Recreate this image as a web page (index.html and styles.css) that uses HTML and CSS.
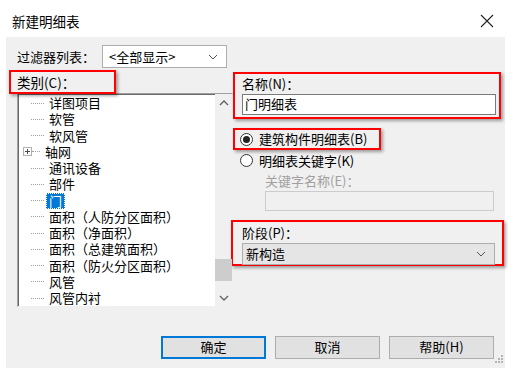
FILE: index.html
```html
<!DOCTYPE html>
<html lang="zh">
<head>
<meta charset="utf-8">
<link rel="stylesheet" href="styles.css">
</head>
<body>
<div class="window">
  <div class="titlebar">
    <span class="title">新建明细表</span>
    <svg class="close" width="14" height="14" viewBox="0 0 14 14"><path d="M1 1 L13 13 M13 1 L1 13" stroke="#222" stroke-width="1.1" fill="none"/></svg>
  </div>
  <div class="dialog">
    <div class="filter-row">
      <span class="filter-label">过滤器列表：</span>
      <div class="combo filter-combo">
        <span>&lt;全部显示&gt;</span>
        <svg class="chev" width="10" height="6" viewBox="0 0 10 6"><path d="M1 1 L5 5 L9 1" stroke="#555" stroke-width="1" fill="none"/></svg>
      </div>
    </div>
    <div class="main">
      <div class="left">
        <div class="cat-label red">类别(C)：</div>
        <div class="tree">
          <ul class="items">
            <li><span class="dots"></span><span class="txt">详图项目</span></li>
            <li><span class="dots"></span><span class="txt">软管</span></li>
            <li><span class="dots"></span><span class="txt">软风管</span></li>
            <li><span class="plus"></span><span class="dots short"></span><span class="txt">轴网</span></li>
            <li><span class="dots"></span><span class="txt">通讯设备</span></li>
            <li><span class="dots"></span><span class="txt">部件</span></li>
            <li><span class="dots"></span><span class="txt sel">门</span></li>
            <li><span class="dots"></span><span class="txt">面积（人防分区面积）</span></li>
            <li><span class="dots"></span><span class="txt">面积（净面积）</span></li>
            <li><span class="dots"></span><span class="txt">面积（总建筑面积）</span></li>
            <li><span class="dots"></span><span class="txt">面积（防火分区面积）</span></li>
            <li><span class="dots"></span><span class="txt">风管</span></li>
            <li><span class="dots"></span><span class="txt">风管内衬</span></li>
            <li><span class="dots"></span><span class="txt">风管隔热层</span></li>
          </ul>
          <div class="scrollbar">
            <svg class="arrow" width="10" height="6" viewBox="0 0 10 6"><path d="M1 5 L5 1 L9 5" stroke="#606060" stroke-width="1.3" fill="none"/></svg>
            <div class="track"><div class="thumb"></div></div>
            <svg class="arrow" width="10" height="6" viewBox="0 0 10 6"><path d="M1 1 L5 5 L9 1" stroke="#606060" stroke-width="1.3" fill="none"/></svg>
          </div>
        </div>
      </div>
      <div class="right">
        <div class="name-box red">
          <div class="lbl">名称(N)：</div>
          <div class="input">门明细表</div>
        </div>
        <div class="radio-box red">
          <span class="radio checked"></span><span class="rtxt">建筑构件明细表(B)</span>
        </div>
        <div class="radio-row">
          <span class="radio"></span><span class="rtxt">明细表关键字(K)</span>
        </div>
        <div class="kw-label">关键字名称(E)：</div>
        <div class="kw-input"></div>
        <div class="phase-box red">
          <div class="lbl">阶段(P)：</div>
          <div class="combo phase-combo">
            <span>新构造</span>
            <svg class="chev" width="10" height="6" viewBox="0 0 10 6"><path d="M1 1 L5 5 L9 1" stroke="#555" stroke-width="1" fill="none"/></svg>
          </div>
        </div>
      </div>
    </div>
    <div class="buttons">
      <div class="btn default">确定</div>
      <div class="btn">取消</div>
      <div class="btn">帮助(H)</div>
    </div>
    <svg class="grip" width="8" height="8" viewBox="0 0 8 8"><g fill="#b5b5b5"><rect x="6" y="0" width="2" height="2"/><rect x="3" y="3" width="2" height="2"/><rect x="6" y="3" width="2" height="2"/><rect x="0" y="6" width="2" height="2"/><rect x="3" y="6" width="2" height="2"/><rect x="6" y="6" width="2" height="2"/></g></svg>
  </div>
</div>
</body>
</html>
```

FILE: styles.css
```css
* { box-sizing: border-box; }
html, body { margin: 0; padding: 0; background: #fff; }
body {
  font-family: "Noto Sans CJK SC", "Microsoft YaHei", sans-serif;
  font-size: 13px;
  color: #000;
  width: 525px;
  height: 385px;
  overflow: hidden;
}
.window { width: 525px; }
.titlebar {
  height: 37px;
  display: flex;
  align-items: center;
  justify-content: space-between;
  padding: 0 31px 0 12px;
}
.title { font-size: 13.5px; line-height: 16px; margin-top: 5px; }
.close { margin-top: 5px; }

.dialog {
  position: relative;
  margin-left: 6px;
  width: 499px;
  height: 331px;
  background: #f0f0f0;
}
.filter-row {
  display: flex;
  align-items: center;
  padding: 8px 0 0 11px;
  height: 31px;
}
.filter-label { width: 85px; line-height: 16px; }
.combo {
  display: flex;
  align-items: center;
  justify-content: space-between;
  border: 1px solid #adadad;
  padding: 0 8px 0 6px;
  line-height: 16px;
}
.filter-combo { width: 125px; height: 23px; background: #fff; }

.main { display: flex; margin-top: 2px; }
.left { width: 227px; }
.red {
  border: 2px solid #f00;
  box-shadow: 2px 2px 3px rgba(0,0,0,0.35);
}
.cat-label {
  position: relative;
  z-index: 1;
  margin-left: 3px;
  width: 107px;
  height: 24px;
  padding: 1px 0 0 6px;
  font-size: 13.5px;
  line-height: 18px;
}
.tree {
  margin-left: 11px;
  margin-top: -1px;
  width: 216px;
  height: 214px;
  background: #fff;
  border: 1px solid;
  border-color: #a0a0a0 #f0f0f0 #f0f0f0 #a0a0a0;
  box-shadow: inset 1px 1px 0 #696969;
  display: flex;
  overflow: hidden;
}
.items {
  list-style: none;
  margin: 0;
  padding: 1px 0 0 0;
  flex: 1;
}
.items li {
  height: 16.25px;
  display: flex;
  align-items: center;
  position: relative;
  white-space: nowrap;
}
.dots {
  margin-left: 13px;
  width: 13px;
  border-top: 1px dotted #a0a0a0;
}
.dots.short { margin-left: 0; width: 8px; }
.plus {
  margin-left: 5px;
  width: 9px;
  height: 9px;
  border: 1px solid #919191;
  background: linear-gradient(#000, #000) center/5px 1px no-repeat,
              linear-gradient(#000, #000) center/1px 5px no-repeat, #fff;
  margin-right: 0;
  opacity: 0.7;
}
.txt { margin-left: 4px; line-height: 16px; padding: 0 1px; }
.txt.sel {
  background: #0078d7;
  color: #fff;
  outline: 1px dotted #fff;
  outline-offset: -1px;
  padding: 0 3px;
  margin-left: 2px;
}
.scrollbar {
  width: 17px;
  background: #f0f0f0;
  display: flex;
  flex-direction: column;
  align-items: center;
}
.arrow { margin: 6px 0 5px; }
.track { flex: 1; width: 17px; position: relative; }
.thumb {
  position: absolute;
  left: 0;
  right: 0;
  top: 148px;
  height: 22px;
  background: #cdcdcd;
}

.right { flex: 1; padding-top: 2px; }
.name-box {
  width: 268px;
  height: 47px;
  padding: 1px 0 0 7px;
}
.lbl { line-height: 17px; height: 18px; }
.input {
  margin-left: 0;
  margin-top: 1px;
  width: 254px;
  height: 21px;
  background: #fff;
  border: 1px solid #7a7a7a;
  padding: 0 0 0 2px;
  line-height: 18px;
}
.radio-box {
  margin-top: 9px;
  width: 148px;
  height: 22px;
  display: flex;
  align-items: center;
  padding-left: 5px;
}
.radio {
  width: 13px;
  height: 13px;
  border-radius: 50%;
  border: 1px solid #333;
  background: #fff;
  flex: none;
  position: relative;
}
.radio.checked::after {
  content: "";
  position: absolute;
  left: 2px;
  top: 2px;
  width: 7px;
  height: 7px;
  border-radius: 50%;
  background: #222;
}
.rtxt { margin-left: 6px; line-height: 16px; }
.radio-row {
  margin-top: 2px;
  height: 17px;
  display: flex;
  align-items: center;
  padding-left: 7px;
}
.kw-label {
  margin-top: 3px;
  padding-left: 32px;
  color: #a0a0a0;
  line-height: 17px;
}
.kw-input {
  margin: 2px 0 0 32px;
  width: 229px;
  height: 20px;
  border: 1px solid #cccccc;
  background: #f0f0f0;
}
.phase-box {
  margin-top: 9px;
  margin-left: -2px;
  width: 273px;
  height: 46px;
  padding: 2px 0 0 9px;
}
.phase-combo {
  margin-top: 1px;
  width: 253px;
  height: 22px;
  background: #e5e5e5;
  padding-left: 3px;
}

.buttons {
  display: flex;
  gap: 9px;
  padding-left: 155px;
  margin-top: 29px;
}
.btn {
  width: 105px;
  height: 23px;
  background: #e1e1e1;
  border: 1px solid #adadad;
  text-align: center;
  line-height: 20px;
}
.btn.default { border: 2px solid #0078d7; line-height: 18px; }
.grip { position: absolute; right: 2px; bottom: 5px; }
```
